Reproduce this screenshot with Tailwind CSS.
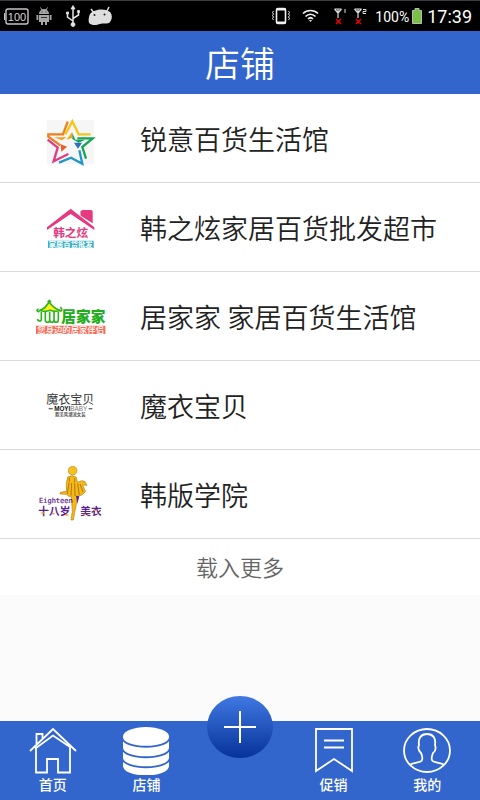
<!DOCTYPE html>
<html lang="zh-CN">

<head>
    <meta charset="UTF-8">
    <meta name="viewport" content="width=device-width, initial-scale=1.0">
    <title>店铺</title>
    <script src="https://cdn.jsdelivr.net/npm/@tailwindcss/browser@4"></script>
</head>

<body class="min-h-screen flex flex-col bg-[#fbfbfb] font-['Roboto','Noto_Sans_CJK_SC',sans-serif]">
    <!-- status bar -->
    <div class="flex items-center justify-between h-[31px] bg-black border-t border-[#3a3d40] text-white pl-1 pr-2">
        <div class="flex items-center">
            <svg class="w-[26px] h-5" viewBox="0 0 26 20" fill="none" stroke="#c4c4c4">
                <rect x="2" y="3" width="22" height="15" rx="2" stroke-width="1.4" />
                <path d="M.5 7v7" stroke-width="1.4" />
                <text x="13" y="14.500" text-anchor="middle" font-family="Liberation Sans" font-size="11" fill="#d4d4d4" stroke="none">100</text>
            </svg>
            <svg class="w-4 h-5 ml-[6px]" viewBox="0 0 16 20" fill="#a8a8a8">
                <path d="M3 8a5 5 0 0 1 10 0zM3 9h10v7H3zM.5 9h1.800v5H.5zM13.700 9h1.800v5h-1.800zM5 16h2v3H5zM9 16h2v3H9z" />
                <path d="M4.500 1.500l1.500 2.500M11.500 1.500L10 4" stroke="#a8a8a8" />
                <path d="M5.500 5.500h1v1h-1zM9.500 5.500h1v1h-1zM5 11h6v1H5z" fill="#333" />
            </svg>
            <svg class="w-4 h-6 ml-[13px]" viewBox="0 0 16 24" fill="#e4e4e4" stroke="#e4e4e4" stroke-width="1.500">
                <path d="M8 4v17M8 17L2.500 13V9M8 14.500l5.500-3.500V8" fill="none" />
                <path d="M8 1.500l2 3.500H6zM1.500 8h2v2h-2zM12.500 6.500h2v2h-2z" stroke-width=".8" />
                <circle cx="8" cy="20.500" r="2" stroke-width=".8" />
            </svg>
            <svg class="w-7 h-5 ml-[6px]" viewBox="0 0 28 20" fill="#dedede">
                <path d="M3 8C7 3 18 2 23 6c3 3 2 9-1 11-3 1-6 0-9 1-3 1-8 2-11-1-1-3 0-7 1-9z" />
                <path d="M4 3l3 4M22 1l-2 4" stroke="#dedede" stroke-width="1.500" />
                <circle cx="7.500" cy="9" r="1" fill="#222" />
                <circle cx="17.500" cy="8.500" r="1" fill="#222" />
            </svg>
        </div>
        <div class="flex items-center">
            <svg class="w-[18px] h-5" viewBox="0 0 18 20" fill="none" stroke="#f0f0f0">
                <rect x="4.500" y="2.500" width="9" height="15" rx="1.500" stroke-width="1.600" />
                <path d="M5 3.500h9M5 16.500h9" stroke-width="2" />
                <path d="M1.500 5l-1 1.500 1 1.500-1 1.500 1 1.500-1 1.500 1 1.500M16.500 5l1 1.500-1 1.500 1 1.500-1 1.500 1 1.500-1 1.500" />
            </svg>
            <svg class="w-[17px] h-4 ml-3" viewBox="0 0 17 16" fill="none" stroke="#f0f0f0" stroke-width="1.700">
                <path d="M1 5.500c4-4 11-4 15 0M3.500 8.500c3-3 7-3 10 0M6 11c1.500-1.500 3.500-1.500 5 0" />
                <path d="M8.500 14l-1.500-2h3z" fill="#f0f0f0" stroke="none" />
            </svg>
            <svg class="w-4 h-5 ml-[14px]" viewBox="0 0 16 20" fill="none" stroke="#ddd">
                <path d="M1.500 3l3.500 4 3.500-4M1.500 3h7M5 3v9" stroke-width="1.200" />
                <path d="M3 13l5 5M8 13l-5 5" stroke="#e00" stroke-width="1.500" />
                <path d="M12 3v4" />
            </svg>
            <svg class="w-4 h-5 ml-1" viewBox="0 0 16 20" fill="none" stroke="#ddd">
                <path d="M1.500 3l3.500 4 3.500-4M1.500 3h7M5 3v9" stroke-width="1.200" />
                <path d="M3 13l5 5M8 13l-5 5" stroke="#e00" stroke-width="1.500" />
                <path d="M10 3.500h3v2h-3v2h3" />
            </svg>
            <span class="text-sm ml-[6px] pt-px">100%</span>
            <svg class="w-3 h-4 ml-[2px]" viewBox="0 0 12 16">
                <path d="M4 .5h4v2h2.500v13h-9v-13H4z" fill="#79c142" stroke="#b8bcb4" />
            </svg>
            <span class="text-lg ml-1 pt-px">17:39</span>
        </div>
    </div>

    <header class="flex items-center justify-center h-[63px] pt-[6px] bg-[#3366cc]">
        <h1 class="text-white text-[35px] leading-10 font-[350]">店铺</h1>
    </header>

    <main class="flex-1">
        <ul class="bg-white text-[27px] text-[#222] font-[350]">
            <li class="border-b border-[#d9d9d9]">
                <a href="#" class="flex items-center gap-5 h-[88px] pl-5">
                    <svg class="w-[100px] h-[70px] shrink-0" viewBox="0 -6 300 210" fill="none" stroke-width="7">
                        <path d="M81 45h141v133H81z" fill="#f6f6f6" />
                        <path d="M143 50l-14 38H85v7l36 26" stroke="#ee7f1d" />
                        <path d="M136 88l21-39 19 39h36" stroke="#f4c51b" />
                        <path d="M172 100h46l-31 26 11 35" stroke="#18a554" />
                        <path d="M178 136l9 40-34-18-36 15" stroke="#2196c9" />
                        <path d="M83 104l30 24-12 41 44-22" stroke="#dc3f82" />
                        <path d="M102 97h26l12-1-14 10zM139 104l18-24v18z" fill="#f3a51d" />
                        <path d="M157 84l9 20h30l-20 9-19-11z" fill="#18a554" />
                        <path d="M162 113h24l-12 18z" fill="#2a6fbb" />
                        <path d="M122 118l19 7-17 15z" fill="#ee5a24" />
                    </svg>
                    <span class="pt-[6px]">锐意百货生活馆</span>
                </a>
            </li>
            <li class="border-b border-[#d9d9d9]">
                <a href="#" class="flex items-center gap-5 h-[88px] pl-5">
                    <svg class="w-[100px] h-[70px] shrink-0" viewBox="0 -9 300 210" font-family="Noto Sans CJK SC" text-anchor="middle">
                        <path d="M181 50q2-5 8-5h24q5 0 5 5v35l-36-23z" fill="#e6397f" />
                        <path d="M81 97l71-56 71 56v8l-71-48-71 48z" fill="#e6397f" />
                        <text x="152" y="126" font-size="35" font-weight="700" fill="#e6397f">韩之炫</text>
                        <path d="M84 137h137v22H84z" fill="#39b0c4" />
                        <text x="152" y="156" font-size="22" font-weight="700" fill="#fff">家居百货批发</text>
                    </svg>
                    <span class="pt-[6px]">韩之炫家居百货批发超市</span>
                </a>
            </li>
            <li class="border-b border-[#d9d9d9]">
                <a href="#" class="flex items-center gap-5 h-[88px] pl-5">
                    <svg class="w-[100px] h-[70px] shrink-0" viewBox="0 -12 300 210" font-family="Noto Sans CJK SC" text-anchor="middle">
                        <path d="M58 76c16-2 22-14 29-25 8 10 18 23 34 25q-16 6-31 0-16 6-32 0z" fill="#fff21a" stroke="#2fb321" stroke-width="5" />
                        <path d="M83 51l5-4 5 4M58 77c-6 8-10-4-2-5M119 77c8 4 8-10 1-9M64 80v23c0 8-12 6-11-1M76 80v25c0 9 13 9 13 0V80M89 105c0 9 13 9 13 0V80M102 105c0 9 13 9 13 0V80" fill="none" stroke="#2fb321" stroke-width="5" />
                        <text x="190" y="112" font-size="44" font-weight="900" fill="#22ad1c">居家家</text>
                        <path d="M48 122h208v25H48z" fill="#fa6b57" />
                        <text x="152" y="143" font-size="25" font-weight="500" fill="#fff">您身边的居家伴侣</text>
                    </svg>
                    <span class="pt-[6px]">居家家 家居百货生活馆</span>
                </a>
            </li>
            <li class="border-b border-[#d9d9d9]">
                <a href="#" class="flex items-center gap-5 h-[88px] pl-5">
                    <svg class="w-[100px] h-[70px] shrink-0" viewBox="0 -15 300 210" font-family="Noto Sans CJK SC" text-anchor="middle" fill="#333">
                        <text x="151" y="87" font-size="36" font-weight="400">魔衣宝贝</text>
                        <text x="152" y="108" font-family="Liberation Sans" font-size="19"><tspan font-weight="700" fill="#111">MOYI</tspan><tspan font-weight="400" fill="#777">BABY</tspan></text>
                        <path d="M86 100h12v3H86zM206 100h11v3h-11z" />
                        <text x="151" y="123" font-size="13" font-weight="500">欧美风潮流女装</text>
                    </svg>
                    <span class="pt-[6px]">魔衣宝贝</span>
                </a>
            </li>
            <li class="border-b border-[#d9d9d9]">
                <a href="#" class="flex items-center gap-5 h-[88px] pl-5">
                    <svg class="w-[100px] h-[70px] shrink-0" viewBox="0 12 300 210" font-family="Noto Sans CJK SC" fill="#5c2191">
                        <path d="M143 66q14-8 26 1l3 15q14-8 22-3l7 12q-10-2-13 0l9 19q-12 12-22 14l-6 24-5 24-4 23h-7l4-26-3-45q-10 3-14-6l-20-1 1-5 19-3q-4-20 3-43z" fill="#f5b914" stroke="#b87a1a" stroke-width="2" />
                        <path d="M147 83l-5 34M155 84l-2 38M164 85l1 38M173 86l5 34M180 87l9 24M148 68v12M164 70v12" fill="none" stroke="#8b5520" stroke-width="2" />
                        <path d="M168 122l10 2-6 22z" />
                        <circle cx="158" cy="47" r="13" fill="#f5c21b" stroke="#c08a20" stroke-width="2" />
                        <text x="57" y="144" font-family="DejaVu Sans Mono" font-size="21" font-weight="400" stroke="#5c2191" stroke-width=".6">Eighteen</text>
                        <text x="55" y="181" font-size="32" font-weight="700">十八岁</text>
                        <text x="181" y="181" font-size="32" font-weight="700">美衣</text>
                        <path d="M64 172h8v4h-8zM96 174h8v4h-8zM136 178h9v4h-9zM190 176h8v4h-8zM222 164h9v4h-9z" fill="#f0a01a" />
                    </svg>
                    <span class="pt-[6px]">韩版学院</span>
                </a>
            </li>
        </ul>
        <button type="button" class="block w-full h-14 pt-[2px] bg-white text-[22px] text-[#666] font-[350]">载入更多</button>
    </main>

    <nav class="grid grid-cols-5 h-[79px] px-[6px] bg-[#3366cc] text-white text-sm font-medium">
        <a href="#" class="flex flex-col items-center pt-[6px]">
            <svg class="w-12 h-12" viewBox="0 0 48 48" fill="none" stroke="#fff" stroke-width="1.800">
                <path d="M1 24L24 2l23 22M7 20v25.500h11V32h11v13.500h12V20L24 8.500 7 21M7.500 17V7h6v4.500" />
            </svg>
            <span class="leading-5">首页</span>
        </a>
        <a href="#" class="flex flex-col items-center pt-[6px]">
            <svg class="w-12 h-12" viewBox="0 0 48 48" fill="#fff">
                <path d="M1 9.500a23 9.500 0 0 1 46 0V39a23 9.500 0 0 1-46 0z" />
                <path d="M0 10c1 13 47 13 48 0M0 20.500c1 13 47 13 48 0M0 30.500c1 13 47 13 48 0" fill="none" stroke="#3366cc" stroke-width="1.800" />
            </svg>
            <span class="leading-5">店铺</span>
        </a>
        <div class="flex justify-center">
            <button type="button" aria-label="添加" class="flex items-center justify-center w-[66px] h-[62px] shrink-0 -mt-[25px] rounded-[50%] bg-linear-to-b from-[#4178e2] to-[#05339a]">
                <svg class="size-8" viewBox="0 0 32 32" stroke="#fff" stroke-width="2">
                    <path d="M0 16h32M16 0v32" />
                </svg>
            </button>
        </div>
        <a href="#" class="flex flex-col items-center pt-[6px]">
            <svg class="w-12 h-12" viewBox="0 0 48 48" fill="none" stroke="#fff" stroke-width="1.800">
                <path d="M6 2h36v42L24 32 6 44zM14 13.500h20M14 20.500h20" />
            </svg>
            <span class="leading-5">促销</span>
        </a>
        <a href="#" class="flex flex-col items-center pt-[6px]">
            <svg class="w-12 h-12" viewBox="0 0 48 48" fill="none" stroke="#fff" stroke-width="1.800">
                <ellipse cx="24" cy="23.500" rx="23" ry="21.500" />
                <path d="M7 38c3-3 12-2 12-5 1-3 0-5-1-7-3-3-3-6-2-8-1-7 2-11 8-11s9 4 8 11c1 3 1 6-2 8-1 3-2 5-1 7 0 3 9 2 12 5" />
            </svg>
            <span class="leading-5">我的</span>
        </a>
    </nav>
</body>

</html>
